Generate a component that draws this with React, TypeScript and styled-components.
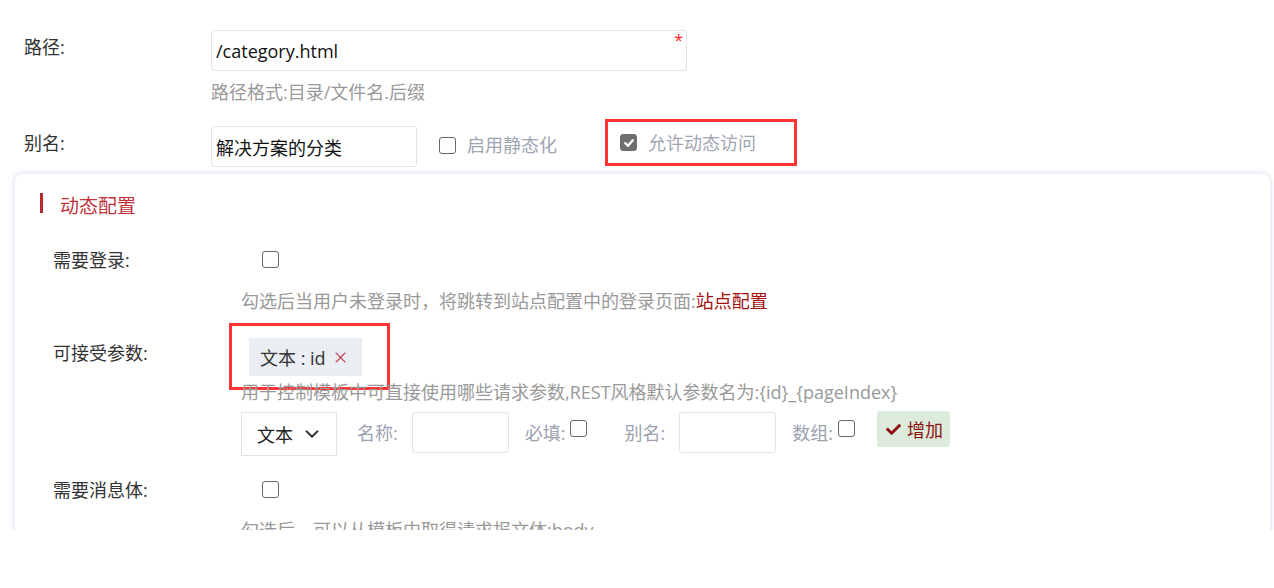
import styled, { createGlobalStyle } from "styled-components";
import { ChevronDown } from "lucide-react";
import { FaCheck } from "react-icons/fa";

const GlobalStyle = createGlobalStyle`
  body {
    margin: 0;
    background: #fff;
    font-family: "Open Sans", "Noto Sans CJK SC", sans-serif;
    font-size: 18px;
    color: #333;
  }
`;

const Page = styled.div`
  height: 530px;
  overflow: hidden;
  padding: 30px 4px 0 15px;
  box-sizing: border-box;
`;

const TopForm = styled.div`
  padding-left: 9px;
`;

const FieldRow = styled.div<{ $mt?: number }>`
  display: flex;
  align-items: flex-start;
  margin-top: ${(p) => p.$mt ?? 0}px;
`;

const Label = styled.div<{ $w: number; $pt?: number }>`
  width: ${(p) => p.$w}px;
  flex-shrink: 0;
  line-height: 24px;
  padding-top: ${(p) => p.$pt ?? 0}px;
  color: #333;
`;

const Control = styled.div`
  display: flex;
  flex-direction: column;
`;

const InputWrap = styled.div`
  position: relative;
`;

const TextInput = styled.div<{ $w: number; $h?: number }>`
  width: ${(p) => p.$w}px;
  height: ${(p) => p.$h ?? 41}px;
  box-sizing: border-box;
  border: 1px solid #dfe3ec;
  border-radius: 3px;
  padding-left: 4px;
  display: flex;
  align-items: center;
  font-size: 18px;
  color: #111;
  background: #fff;
`;

const Required = styled.span`
  position: absolute;
  top: 0;
  right: 4px;
  color: #f22;
  font-size: 16px;
  line-height: 20px;
`;

const Hint = styled.div<{ $mt: number }>`
  margin-top: ${(p) => p.$mt}px;
  line-height: 24px;
  color: #999;
  white-space: nowrap;
`;

const Link = styled.span`
  color: #a30f0f;
`;

const Check = styled.span<{ $checked?: boolean }>`
  width: 17px;
  height: 17px;
  box-sizing: border-box;
  border: 1.5px solid ${(p) => (p.$checked ? "#6f6f6f" : "#666")};
  background: ${(p) => (p.$checked ? "#6f6f6f" : "#fff")};
  border-radius: 3px;
  display: inline-flex;
  align-items: center;
  justify-content: center;
  flex-shrink: 0;
`;

const CheckOption = styled.div`
  display: flex;
  align-items: center;
  gap: 11px;
  color: #a0a5b3;
  line-height: 24px;
`;

const Highlight = styled.div`
  border: 3px solid #f33;
  box-sizing: border-box;
  display: flex;
  align-items: center;
`;

const StaticOpt = styled(CheckOption)`
  margin-left: 22px;
  margin-top: 7px;
`;

const DynamicBox = styled(Highlight)`
  margin-left: 48px;
  margin-top: -7px;
  width: 192px;
  height: 47px;
  padding-left: 12px;
`;

const Card = styled.div`
  margin-top: 7px;
  height: 400px;
  border-radius: 8px;
  background: #fff;
  box-shadow: 0 0 6px rgba(170, 182, 215, 0.6);
  padding: 19px 0 0 25px;
`;

const SectionTitle = styled.div`
  border-left: 3px solid #b8282f;
  padding-left: 17px;
  line-height: 20px;
  font-size: 19px;
  color: #c0313a;
  span {
    position: relative;
    top: 3px;
  }
`;

const CardRows = styled.div`
  padding-left: 13px;
`;

const CardCheck = styled(Check)`
  margin-left: 21px;
  margin-top: 3px;
`;

const TagBox = styled(Highlight)`
  margin-left: -12px;
  margin-top: -11px;
  width: 161px;
  height: 67px;
  padding-left: 17px;
  margin-bottom: -18px;
`;

const Tag = styled.div`
  height: 38px;
  width: 113px;
  box-sizing: border-box;
  padding-left: 11px;
  background: #eaeef3;
  display: flex;
  align-items: center;
  color: #333;
  gap: 8px;
`;

const TagClose = styled.span`
  color: #c0313a;
  font-size: 24px;
  font-weight: 300;
  line-height: 20px;
`;

const ParamRow = styled.div`
  margin-top: 7px;
  display: flex;
  align-items: flex-start;
`;

const Select = styled.div`
  width: 96px;
  height: 44px;
  box-sizing: border-box;
  border: 1px solid #dfe3ec;
  display: flex;
  align-items: center;
  justify-content: space-between;
  padding: 0 13px 0 15px;
  margin-top: 1px;
  color: #222;
`;

const FieldName = styled.span<{ $ml: number }>`
  margin-left: ${(p) => p.$ml}px;
  color: #9ba1af;
  line-height: 24px;
  margin-top: 10px;
  white-space: nowrap;
`;

const SmallInput = styled(TextInput)`
  margin-left: 14px;
  margin-top: 1px;
`;

const InlineCheck = styled(Check)`
  margin-left: 5px;
  margin-top: 9px;
`;

const AddButton = styled.div`
  margin-left: 22px;
  width: 73px;
  height: 36px;
  box-sizing: border-box;
  background: #dcebdc;
  border-radius: 3px;
  color: #8b1010;
  display: flex;
  align-items: center;
  gap: 6px;
  padding-left: 9px;
`;

const CheckMark = () => (
  <svg width="12" height="12" viewBox="0 0 12 12">
    <path d="M2.3 6.2 L5 8.8 L9.8 3.2" stroke="#fff" strokeWidth="2.4" fill="none" strokeLinecap="round" strokeLinejoin="round" />
  </svg>
);

const App = () => {
  return (
    <>
      <GlobalStyle />
      <Page>
        <TopForm>
          <FieldRow>
            <Label $w={187} $pt={5}>路径:</Label>
            <Control>
              <InputWrap>
                <TextInput $w={476}>/category.html</TextInput>
                <Required>*</Required>
              </InputWrap>
              <Hint $mt={9}>路径格式:目录/文件名.后缀</Hint>
            </Control>
          </FieldRow>
          <FieldRow $mt={22}>
            <Label $w={187} $pt={5}>别名:</Label>
            <TextInput $w={206}>解决方案的分类</TextInput>
            <StaticOpt>
              <Check />
              启用静态化
            </StaticOpt>
            <DynamicBox>
              <CheckOption>
                <Check $checked>
                  <CheckMark />
                </Check>
                允许动态访问
              </CheckOption>
            </DynamicBox>
          </FieldRow>
        </TopForm>

        <Card>
          <SectionTitle>
            <span>动态配置</span>
          </SectionTitle>
          <CardRows>
            <FieldRow $mt={35}>
              <Label $w={188}>需要登录:</Label>
              <CardCheck />
            </FieldRow>
            <FieldRow>
              <Label $w={188} />
              <Hint $mt={17}>
                勾选后当用户未登录时，将跳转到站点配置中的登录页面:<Link>站点配置</Link>
              </Hint>
            </FieldRow>
            <FieldRow $mt={21}>
              <Label $w={188} $pt={7}>可接受参数:</Label>
              <Control>
                <TagBox>
                  <Tag>
                    文本 : id <TagClose>×</TagClose>
                  </Tag>
                </TagBox>
                <Hint $mt={8}>
                  用于控制模板中可直接使用哪些请求参数,REST风格默认参数名为:{"{id}_{pageIndex}"}
                </Hint>
                <ParamRow>
                  <Select>
                    文本
                    <ChevronDown size={22} strokeWidth={2} color="#333" />
                  </Select>
                  <FieldName $ml={20}>名称:</FieldName>
                  <SmallInput $w={97} />
                  <FieldName $ml={16}>必填:</FieldName>
                  <InlineCheck />
                  <FieldName $ml={37}>别名:</FieldName>
                  <SmallInput $w={97} />
                  <FieldName $ml={16}>数组:</FieldName>
                  <InlineCheck />
                  <AddButton>
                    <FaCheck size={15} />
                    增加
                  </AddButton>
                </ParamRow>
              </Control>
            </FieldRow>
            <FieldRow $mt={22}>
              <Label $w={188}>需要消息体:</Label>
              <CardCheck />
            </FieldRow>
            <FieldRow>
              <Label $w={188} />
              <Hint $mt={16}>勾选后，可以从模板中取得请求报文体:body</Hint>
            </FieldRow>
          </CardRows>
        </Card>
      </Page>
    </>
  );
};

export default App;
